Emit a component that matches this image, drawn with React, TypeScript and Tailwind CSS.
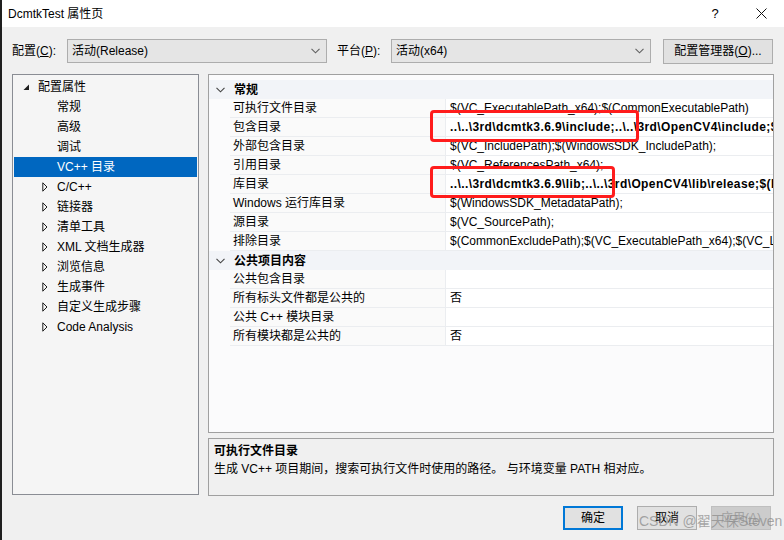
import React from 'react';

type TreeItem = { label: string; level: 0 | 1; expander?: 'open' | 'closed'; selected?: boolean };

const treeItems: TreeItem[] = [
  { label: '配置属性', level: 0, expander: 'open' },
  { label: '常规', level: 1 },
  { label: '高级', level: 1 },
  { label: '调试', level: 1 },
  { label: 'VC++ 目录', level: 1, selected: true },
  { label: 'C/C++', level: 1, expander: 'closed' },
  { label: '链接器', level: 1, expander: 'closed' },
  { label: '清单工具', level: 1, expander: 'closed' },
  { label: 'XML 文档生成器', level: 1, expander: 'closed' },
  { label: '浏览信息', level: 1, expander: 'closed' },
  { label: '生成事件', level: 1, expander: 'closed' },
  { label: '自定义生成步骤', level: 1, expander: 'closed' },
  { label: 'Code Analysis', level: 1, expander: 'closed' },
];

type GridRow =
  | { kind: 'cat'; label: string }
  | { kind: 'prop'; name: string; value: string; bold?: boolean };

const gridRows: GridRow[] = [
  { kind: 'cat', label: '常规' },
  { kind: 'prop', name: '可执行文件目录', value: '$(VC_ExecutablePath_x64);$(CommonExecutablePath)' },
  { kind: 'prop', name: '包含目录', value: '..\\..\\3rd\\dcmtk3.6.9\\include;..\\..\\3rd\\OpenCV4\\include;$(IncludePath)', bold: true },
  { kind: 'prop', name: '外部包含目录', value: '$(VC_IncludePath);$(WindowsSDK_IncludePath);' },
  { kind: 'prop', name: '引用目录', value: '$(VC_ReferencesPath_x64);' },
  { kind: 'prop', name: '库目录', value: '..\\..\\3rd\\dcmtk3.6.9\\lib;..\\..\\3rd\\OpenCV4\\lib\\release;$(LibraryPath)', bold: true },
  { kind: 'prop', name: 'Windows 运行库目录', value: '$(WindowsSDK_MetadataPath);' },
  { kind: 'prop', name: '源目录', value: '$(VC_SourcePath);' },
  { kind: 'prop', name: '排除目录', value: '$(CommonExcludePath);$(VC_ExecutablePath_x64);$(VC_LibraryPath_x64)' },
  { kind: 'cat', label: '公共项目内容' },
  { kind: 'prop', name: '公共包含目录', value: '' },
  { kind: 'prop', name: '所有标头文件都是公共的', value: '否' },
  { kind: 'prop', name: '公共 C++ 模块目录', value: '' },
  { kind: 'prop', name: '所有模块都是公共的', value: '否' },
];

function Chevron({ className = '' }: { className?: string }) {
  return (
    <svg width="9" height="6" viewBox="0 0 9 6" className={className}>
      <path d="M0.5 0.8 L4.5 4.8 L8.5 0.8" fill="none" stroke="currentColor" strokeWidth="1.1" />
    </svg>
  );
}

function Dropdown({ value }: { value: string }) {
  return (
    <div className="flex items-center w-[260px] h-[24px] bg-[#e5e5e5] border border-[#adadad] pl-[4px] pr-[6px]">
      <span className="flex-1">{value}</span>
      <Chevron className="text-[#606060]" />
    </div>
  );
}

export default function App() {
  return (
    <div className="relative w-[784px] h-[540px] overflow-hidden bg-[#f0f0f0] border-l-2 border-[#1f1f1f] text-[12px] leading-[16px] text-black font-['Liberation_Sans','Noto_Sans_CJK_SC',sans-serif]">
      {/* title bar */}
      <div className="flex items-center h-[27px] bg-white pl-[6px]">
        <span className="font-['Liberation_Sans_Narrow','Liberation_Sans','Noto_Sans_CJK_SC',sans-serif] text-[12px]">
          DcmtkTest 属性页
        </span>
        <div className="ml-auto flex">
          <span className="w-[46px] text-center text-[13px]">?</span>
          <span className="w-[46px] flex items-center justify-center">
            <svg width="11" height="11" viewBox="0 0 11 11">
              <path d="M0.5 0.5 L10.5 10.5 M10.5 0.5 L0.5 10.5" stroke="#111" strokeWidth="1" />
            </svg>
          </span>
        </div>
      </div>

      {/* configuration row */}
      <div className="flex items-center mt-[12px] h-[24px] pl-[10px]">
        <span className="w-[55px]">
          配置(<u>C</u>):
        </span>
        <Dropdown value="活动(Release)" />
        <span className="w-[54px] ml-[10px]">
          平台(<u>P</u>):
        </span>
        <Dropdown value="活动(x64)" />
        <button className="ml-[12px] w-[110px] h-[25px] bg-[#e1e1e1] border border-[#adadad]">
          配置管理器(<u>O</u>)...
        </button>
      </div>

      {/* main area */}
      <div className="flex mt-[11px] pl-[10px]">
        <div className="w-[187px] h-[421px] bg-[#f5f5f5] border border-[#8a8d94] pt-[2px]">
          {treeItems.map((item) => (
            <div
              key={item.label}
              className={`flex items-center h-[20px] mx-[1px] ${
                item.level === 0 ? 'pl-[9px]' : 'pl-[28px]'
              } ${item.selected ? 'bg-[#0067c0] text-white' : ''}`}
            >
              <span className="w-[15px] flex items-center">
                {item.expander === 'open' && (
                  <svg width="7" height="7" viewBox="0 0 7 7">
                    <polygon points="6,0.5 6,6 0.5,6" fill="#1e1e1e" />
                  </svg>
                )}
                {item.expander === 'closed' && (
                  <svg width="6" height="10" viewBox="0 0 6 10">
                    <polygon points="0.8,0.8 5,5 0.8,9.2" fill="none" stroke="#1e1e1e" strokeWidth="1" />
                  </svg>
                )}
              </span>
              <span>{item.label}</span>
            </div>
          ))}
        </div>

        <div className="ml-[9px] w-[566px] flex flex-col">
          {/* property grid */}
          <div className="relative h-[359px] bg-[#fbfbfc] border border-[#a0a0a0] pt-[5px] overflow-hidden">
            {gridRows.map((row, i) =>
              row.kind === 'cat' ? (
                <div key={i} className="flex items-center h-[19px] bg-[#f2f4f8]">
                  <span className="w-[21px] flex justify-center pl-[2px]">
                    <Chevron className="text-[#444]" />
                  </span>
                  <span className="pl-[4px] font-bold">{row.label}</span>
                </div>
              ) : (
                <div key={i} className="flex h-[19px]">
                  <span className="w-[21px]" />
                  <span className="w-[215px] pl-[3px] flex items-center bg-[#fafafa] border-b border-[#ebedf0] whitespace-nowrap">
                    {row.name}
                  </span>
                  <span
                    className={`flex-1 pl-[4px] flex items-center bg-white border-l border-b border-[#ebedf0] whitespace-nowrap overflow-hidden ${
                      row.bold ? 'font-bold tracking-[0.4px]' : ''
                    }`}
                  >
                    {row.value}
                  </span>
                </div>
              )
            )}

            {/* annotation boxes */}
            <div className="absolute left-[221px] top-[35px] w-[209px] h-[32px] border-[3px] border-[#ff1c1c] rounded-[4px]" />
            <div className="absolute left-[221px] top-[91px] w-[185px] h-[32px] border-[3px] border-[#ff1c1c] rounded-[4px]" />
          </div>

          {/* description */}
          <div className="mt-[5px] h-[58px] bg-[#f0f0f0] border border-[#a0a0a0] px-[5px] pt-[3px]">
            <div className="h-[18px] flex items-center font-bold">可执行文件目录</div>
            <div className="h-[18px] flex items-center">
              生成 VC++ 项目期间，搜索可执行文件时使用的路径。 与环境变量 PATH 相对应。
            </div>
          </div>
        </div>
      </div>

      {/* buttons */}
      <div className="flex justify-end gap-[14px] mt-[10px] pr-[13px]">
        <button className="w-[60px] h-[24px] bg-[#e1e1e1] border-2 border-[#0078d7]">确定</button>
        <button className="w-[60px] h-[24px] bg-[#e1e1e1] border border-[#adadad]">取消</button>
        <button className="w-[60px] h-[24px] bg-[#cccccc] border border-[#bfbfbf] text-[#a0a0a0]">
          应用(<u>A</u>)
        </button>
      </div>

      {/* watermark */}
      <div className="absolute left-[637px] top-[511px] text-[14px] leading-[20px] text-[rgba(140,140,140,0.75)] whitespace-nowrap">
        CSDN @翟天保Steven
      </div>
    </div>
  );
}
